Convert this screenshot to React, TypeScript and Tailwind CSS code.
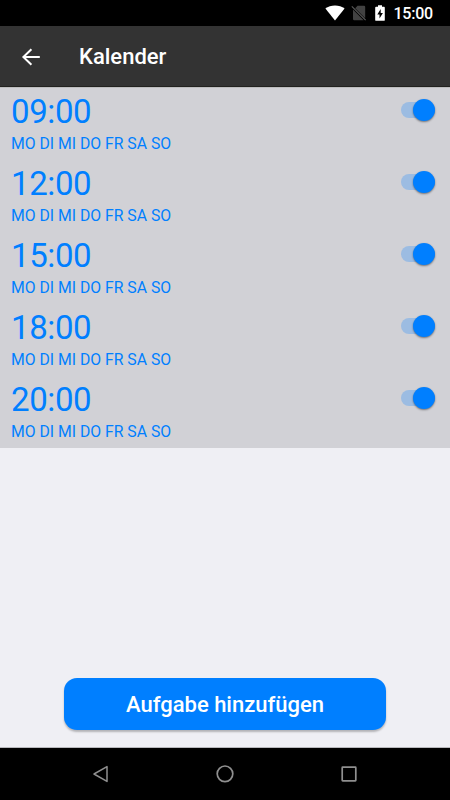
import React, { useState } from 'react';

const initialAlarms = [
    { id: 1, time: "09:00", active: true },
    { id: 2, time: "12:00", active: true },
    { id: 3, time: "15:00", active: true },
    { id: 4, time: "18:00", active: true },
    { id: 5, time: "20:00", active: true },
];

const StatusBar = () => (
    <div className="h-[26px] shrink-0 bg-black flex items-center justify-end pr-[17px] text-white">
        {/* Wifi */}
        <svg className="w-5 h-4 mr-[6px]" viewBox="0 0 20 16" fill="currentColor">
            <path d="M10 15.6 0.4 3.6C3 1.6 6.3 0.4 10 0.4s7 1.2 9.6 3.2z" />
        </svg>
        {/* No sim */}
        <svg className="w-4 h-4 mr-2" viewBox="0 0 16 16">
            <path d="M6.5 0.8H13a1.2 1.2 0 0 1 1.2 1.2v11.2L4.200 3.200z" fill="#424242" />
            <path d="M2 4.6 12.6 15.200H3.2A1.2 1.2 0 0 1 2 14z" fill="#424242" />
            <path d="M0.800 1.400 14.600 15.200" stroke="#5c5c5c" strokeWidth="1.100" />
        </svg>
        {/* Battery */}
        <svg className="w-[10px] h-4 mr-2" viewBox="0 0 10 16">
            <path d="M3 0.300h4v1.500h2A0.900 0.900 0 0 1 9.800 2.700v12.200a0.900 0.900 0 0 1-0.900 0.900H1.100a0.900 0.900 0 0 1-0.900-0.900V2.700a0.900 0.900 0 0 1 0.900-0.900H3z" fill="#fff" />
            <path d="M5.700 4 2.300 9.400h2.200v4.200L7.900 8.100H5.700z" fill="#000" />
        </svg>
        <span className="text-[16px] leading-none font-medium tracking-[-0.2px] pt-[2px]">15:00</span>
    </div>
);

const Header = () => (
    <div className="h-[61px] shrink-0 bg-[#333333] border-b border-[#22221f] flex items-center pl-[21px]">
        <button aria-label="Zurück" className="cursor-pointer pt-[2px]">
            <svg className="w-5 h-5" viewBox="0 0 20 20" fill="none" stroke="#fff" strokeWidth="2">
                <path d="M18.800 10H2.500M10.400 2.200 2.400 10l8 7.800" />
            </svg>
        </button>
        <h1 className="ml-[38px] pt-[2px] text-[22px] leading-none font-medium text-white">Kalender</h1>
    </div>
);

const Toggle = ({ active, onChange }: { active: boolean; onChange: () => void }) => (
    <button
        role="switch"
        aria-checked={active}
        aria-label="Aktiv"
        onClick={onChange}
        className={`w-[34px] h-4 rounded-full flex items-center cursor-pointer ${active ? "justify-end bg-[#9cbce2]" : "justify-start bg-gray-400"}`}
    >
        <span className={`size-[22px] shrink-0 rounded-full shadow-[0_1px_2px_rgba(0,0,0,0.45)] ${active ? "bg-[#007fff]" : "bg-gray-100"}`} />
    </button>
);

const App = () => {
    const [alarms, setAlarms] = useState(initialAlarms);

    const toggleAlarm = (id: number) => {
        setAlarms(alarms.map((a) => (a.id === id ? { ...a, active: !a.active } : a)));
    };

    return (
        <div className="h-screen flex flex-col bg-[#efeff4] font-[Roboto,sans-serif] overflow-hidden">
            <StatusBar />
            <Header />

            {/* Alarm list */}
            <div className="bg-[#d1d1d6] border-t border-[#bebebf]">
                {alarms.map((alarm) => (
                    <div key={alarm.id} className="h-[72px] pl-[11px] pr-[15px] flex justify-between text-[#007fff]">
                        <div className="pt-px">
                            <div className="h-[46px] text-[33px] leading-[46px] tracking-[-0.4px]">{alarm.time}</div>
                            <div className="text-[15.75px] leading-[18px]">MO DI MI DO FR SA SO</div>
                        </div>
                        <div className="h-11 flex items-center">
                            <Toggle active={alarm.active} onChange={() => toggleAlarm(alarm.id)} />
                        </div>
                    </div>
                ))}
            </div>

            {/* Add button */}
            <div className="flex-1 flex flex-col justify-end items-center pb-[17px] border-b border-[#b8b8bc]">
                <button className="w-[322px] h-[52px] rounded-[13px] bg-[#007fff] text-white text-[22px] font-medium cursor-pointer shadow-[0_2px_2px_rgba(0,0,0,0.25)]">
                    Aufgabe hinzufügen
                </button>
            </div>

            {/* Navigation bar */}
            <div className="h-[52px] shrink-0 bg-black flex items-center justify-between pl-[92px] pr-[92px]">
                <svg className="w-[18px] h-[18px]" viewBox="0 0 18 18" fill="none" stroke="#8f8f8f" strokeWidth="1.500">
                    <path d="M15 1.600v14.800L2 9z" strokeLinejoin="round" />
                </svg>
                <svg className="w-[18px] h-[18px]" viewBox="0 0 18 18" fill="none" stroke="#8f8f8f" strokeWidth="1.700">
                    <circle cx="9" cy="8.800" r="7.800" />
                </svg>
                <svg className="w-[18px] h-[18px]" viewBox="0 0 18 18" fill="none" stroke="#8f8f8f" strokeWidth="1.700">
                    <rect x="2.200" y="2.200" width="13.600" height="13.600" rx="0.500" />
                </svg>
            </div>
        </div>
    );
};

export default App;
